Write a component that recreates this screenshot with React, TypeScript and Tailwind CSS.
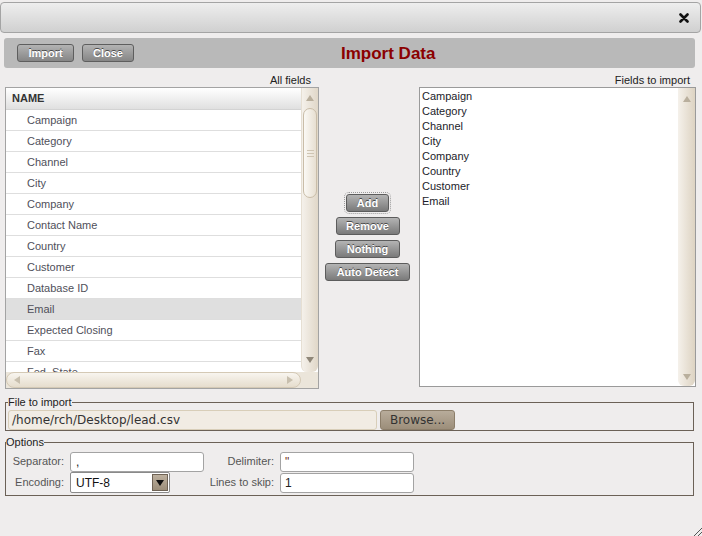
import React from "react";

const leftFields = [
	"Campaign",
	"Category",
	"Channel",
	"City",
	"Company",
	"Contact Name",
	"Country",
	"Customer",
	"Database ID",
	"Email",
	"Expected Closing",
	"Fax",
	"Fed. State",
];

const chosenFields = ["Campaign", "Category", "Channel", "City", "Company", "Country", "Customer", "Email"];

const Arrow = ({ dir, color = "#b9af9d" }: { dir: "up" | "down" | "left" | "right"; color?: string }) => {
	const pts = {
		up: "0,6 4,0 8,6",
		down: "0,0 8,0 4,6",
		left: "6,0 6,8 0,4",
		right: "0,0 0,8 6,4",
	}[dir];
	const horiz = dir === "left" || dir === "right";
	return (
		<svg width={horiz ? 6 : 8} height={horiz ? 8 : 6} viewBox={horiz ? "0 0 6 8" : "0 0 8 6"}>
			<polygon points={pts} fill={color} />
		</svg>
	);
};

const GrayBtn = ({ w, children, focus }: { w: string; children: React.ReactNode; focus?: boolean }) => (
	<button
		className={`${w} h-[18px] rounded-[3px] border border-[#5c5c5c] bg-gradient-to-b from-[#b4b4b4] to-[#7a7a7a] text-white font-bold text-[11px] leading-none [text-shadow:0_-1px_0_#4a4a4a] ${
			focus ? "outline-1 outline-dotted outline-[#9a9a9a] outline-offset-[1px]" : ""
		}`}
	>
		{children}
	</button>
);

const ToolBtn = ({ w, children }: { w: string; children: React.ReactNode }) => (
	<button className={`${w} h-[18px] rounded-[3px] border border-[#5e5e5e] bg-gradient-to-b from-[#b3b3b3] to-[#868686] text-white font-bold text-[11px] leading-none [text-shadow:0_-1px_0_#4a4a4a]`}>
		{children}
	</button>
);

const App = () => {
	return (
		<div className="relative w-[702px] h-[536px] overflow-hidden bg-[#efeded] font-['Liberation_Sans',Arial,sans-serif] text-[11px] text-[#222]">
			{/* Title bar */}
			<div className="mt-[2px] h-[31px] w-[701px] rounded-[4px] border border-[#a4a4a4] bg-gradient-to-b from-[#eeeeee] to-[#d0d0d0] flex items-center justify-end pr-[11px]">
				<svg width="10" height="10" viewBox="0 0 10 10">
					<path d="M1.5 1.5 L8.5 8.5 M8.5 1.5 L1.5 8.5" stroke="#111" strokeWidth="2.6" strokeLinecap="round" />
				</svg>
			</div>

			{/* Toolbar */}
			<div className="mt-[5px] ml-[4px] w-[691px] h-[30px] rounded-[3px] bg-[#b9b9b9] flex items-center pl-[13px] gap-[8px]">
				<ToolBtn w="w-[57px]">Import</ToolBtn>
				<ToolBtn w="w-[52px]">Close</ToolBtn>
				<span className="ml-[199px] text-[17px] font-bold text-[#8b0000] leading-none">Import Data</span>
			</div>

			{/* Column labels */}
			<div className="mt-[6px] h-[13px] flex leading-[13px]">
				<div className="w-[311px] text-right">All fields</div>
				<div className="w-[379px] text-right">Fields to import</div>
			</div>

			{/* Main area */}
			<div className="ml-[5px] flex h-[301px]">
				{/* Left grid */}
				<div className="w-[314px] h-[302px] border border-[#a3a3a3] bg-white flex flex-col">
					<div className="flex h-[284px]">
						<div className="w-[295px] h-[284px] overflow-hidden">
							<div className="h-[22px] pl-[6px] flex items-center font-bold text-[#333] bg-gradient-to-b from-white to-[#e0e0e0] border-b border-[#d3d3d3]">
								NAME
							</div>
							{leftFields.map((f) => (
								<div
									key={f}
									className={`h-[21px] pl-[21px] flex items-center border-b border-[#dedede] text-[#4f4f5a] ${
										f === "Email" ? "bg-[#dfdfdf]" : ""
									}`}
								>
									{f}
								</div>
							))}
						</div>
						{/* vertical scrollbar */}
						<div className="w-[17px] h-[284px] rounded-b-[6px] bg-gradient-to-r from-[#f5f1eb] to-[#e0d7c8] border-l border-[#e6dfd3] flex flex-col items-center">
							<div className="h-[20px] flex items-center">
								<Arrow dir="up" />
							</div>
							<div className="w-[14px] h-[90px] rounded-full border border-[#c9bda8] bg-gradient-to-r from-[#fbf9f5] to-[#e7dfd1] flex flex-col items-center justify-center gap-[2px]">
								<div className="w-[7px] h-px bg-[#cfc5b3]" />
								<div className="w-[7px] h-px bg-[#cfc5b3]" />
								<div className="w-[7px] h-px bg-[#cfc5b3]" />
							</div>
							<div className="flex-1" />
							<div className="h-[18px] flex items-start pt-[3px]">
								<Arrow dir="down" color="#8f8779" />
							</div>
						</div>
					</div>
					{/* horizontal scrollbar */}
					<div className="flex h-[16px] bg-[#ebe5da]">
						<div className="w-[295px] h-[16px] rounded-full border border-[#d4c9b5] bg-gradient-to-b from-[#f8f5ef] to-[#e6ddcd] flex items-center justify-between px-[7px]">
							<Arrow dir="left" color="#c8bfae" />
							<Arrow dir="right" color="#c8bfae" />
						</div>
						<div className="flex-1" />
					</div>
				</div>

				{/* Middle buttons */}
				<div className="w-[100px] flex flex-col items-center pt-[107px] pr-[3px] gap-[5px]">
					<GrayBtn w="w-[43px]" focus>
						Add
					</GrayBtn>
					<GrayBtn w="w-[64px]">Remove</GrayBtn>
					<GrayBtn w="w-[65px]">Nothing</GrayBtn>
					<GrayBtn w="w-[85px]">Auto Detect</GrayBtn>
				</div>

				{/* Right list */}
				<div className="w-[277px] h-[300px] border border-[#9a9a9a] bg-white flex">
					<div className="flex-1 pt-[1px] pl-[2px] text-[#1c1c2a]">
						{chosenFields.map((f) => (
							<div key={f} className="h-[15px] leading-[15px]">
								{f}
							</div>
						))}
					</div>
					<div className="w-[17px] h-full rounded-b-[6px] bg-gradient-to-r from-[#f5f1eb] to-[#ddd3c2] flex flex-col items-center justify-between pt-[8px] pb-[6px]">
						<Arrow dir="up" />
						<Arrow dir="down" />
					</div>
				</div>
			</div>

			{/* File to import */}
			<fieldset className="mt-[8px] ml-[5px] w-[689px] border border-[#6b6157] pl-[2px]">
				<legend className="leading-[13px] text-[#222]">File to import</legend>
				<div className="mt-[1px] flex gap-[3px]">
					<div className="w-[369px] h-[20px] rounded-[3px] border border-[#d8ceb9] bg-[#f1ece4] flex items-center pl-[3px] font-['DejaVu_Sans',sans-serif] text-[12px] text-[#333]">
						/home/rch/Desktop/lead.csv
					</div>
					<button className="w-[75px] h-[20px] rounded-[3px] border border-[#8c7e6a] bg-gradient-to-b from-[#b8ac9b] to-[#9c8e7a] font-['DejaVu_Sans',sans-serif] text-[12px] text-[#333] leading-none">
						Browse...
					</button>
				</div>
			</fieldset>

			{/* Options */}
			<fieldset className="mt-[5px] ml-[5px] w-[689px] border border-[#6b6157] pb-[2px]">
				<legend className="leading-[13px] text-[#222]">Options</legend>
				<div className="mt-[2px] flex items-center h-[21px] text-[#555] whitespace-nowrap">
					<div className="w-[58px] text-right">Separator:</div>
					<div className="ml-[6px] w-[134px] h-[20px] rounded-[3px] border border-[#a3a3a3] bg-white pl-[5px] flex items-center text-[12px] text-[#222]">
						,
					</div>
					<div className="w-[70px] text-right">Delimiter:</div>
					<div className="ml-[6px] w-[134px] h-[20px] rounded-[3px] border border-[#a3a3a3] bg-white pl-[4px] flex items-center text-[12px] text-[#6b2a1a]">
						"
					</div>
				</div>
				<div className="flex items-center h-[21px] text-[#555] whitespace-nowrap">
					<div className="w-[58px] text-right">Encoding:</div>
					<div className="ml-[6px] w-[100px] h-[21px] rounded-[2px] border border-[#8a8a8a] bg-white flex items-center justify-between pl-[5px] pr-px text-[12px] text-[#111]">
						UTF-8
						<div className="w-[16px] h-[17px] border border-[#6e6254] bg-gradient-to-b from-[#bdb09e] to-[#9c8e7a] flex items-center justify-center">
							<Arrow dir="down" color="#111" />
						</div>
					</div>
					<div className="w-[104px] text-right">Lines to skip:</div>
					<div className="ml-[6px] w-[134px] h-[20px] rounded-[3px] border border-[#a3a3a3] bg-white pl-[4px] flex items-center text-[12px] text-[#222]">
						1
					</div>
				</div>
			</fieldset>

			{/* Resize grip */}
			<svg className="absolute right-0 bottom-0" width="10" height="10" viewBox="0 0 10 10">
				<path d="M2 10 L10 2 M6 10 L10 6" stroke="#555" strokeWidth="1" />
			</svg>
		</div>
	);
};

export default App;
